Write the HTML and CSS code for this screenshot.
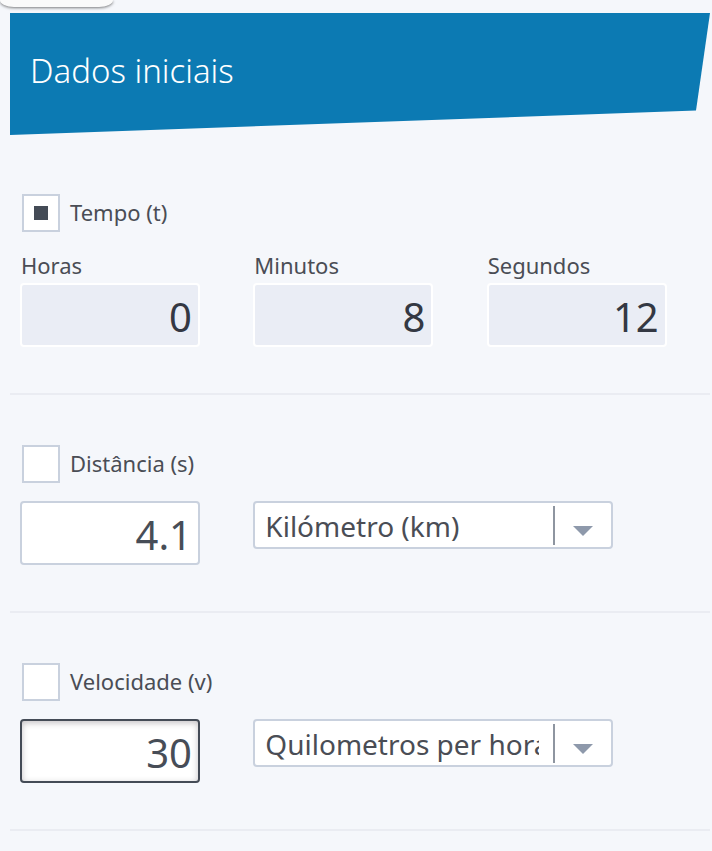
FILE: index.html
```html
<!DOCTYPE html>
<html lang="pt">
  <head>
    <meta charset="utf-8">
    <meta name="viewport" content="width=device-width, initial-scale=1">
    <title>Dados iniciais</title>
    <link rel="stylesheet" href="styles.css">
  </head>
  <body>
    <div class="tab"></div>

    <form class="calculator">
      <header class="header">
        <h1 class="title">Dados iniciais</h1>
      </header>

      <section class="section">
        <label class="option">
          <input class="checkbox" type="checkbox" checked>
          Tempo (t)
        </label>
        <div class="fields">
          <div class="field">
            <label class="field-label" for="hours">Horas</label>
            <input class="number" id="hours" type="text" value="0" disabled>
          </div>
          <div class="field">
            <label class="field-label" for="minutes">Minutos</label>
            <input class="number" id="minutes" type="text" value="8" disabled>
          </div>
          <div class="field">
            <label class="field-label" for="seconds">Segundos</label>
            <input class="number" id="seconds" type="text" value="12" disabled>
          </div>
        </div>
      </section>

      <section class="section">
        <label class="option">
          <input class="checkbox" type="checkbox">
          Distância (s)
        </label>
        <div class="fields">
          <input class="number" type="text" value="4.1" aria-label="Distância">
          <div class="unit">
            <select class="unit-select" aria-label="Unidade de distância">
              <option>Kilómetro (km)</option>
            </select>
            <span class="unit-divider"></span>
            <svg class="unit-arrow" width="20" height="10" viewBox="0 0 20 10">
              <path d="M0 0h20L10 10z" fill="#8e99ab"/>
            </svg>
          </div>
        </div>
      </section>

      <section class="section">
        <label class="option">
          <input class="checkbox" type="checkbox">
          Velocidade (v)
        </label>
        <div class="fields">
          <input class="number number-active" type="text" value="30" aria-label="Velocidade">
          <div class="unit">
            <select class="unit-select" aria-label="Unidade de velocidade">
              <option>Quilometros per hora (km/h)</option>
            </select>
            <span class="unit-divider"></span>
            <svg class="unit-arrow" width="20" height="10" viewBox="0 0 20 10">
              <path d="M0 0h20L10 10z" fill="#8e99ab"/>
            </svg>
          </div>
        </div>
      </section>
    </form>
  </body>
</html>
```
FILE: styles.css
```css
* {
  box-sizing: border-box;
}

body {
  margin: 0;
  background-color: #f5f7fb;
  color: #4a4d55;
  font-family: "Noto Sans", sans-serif;
  font-size: 22px;
}

/* bottom edge of the tab that hangs over the page */
.tab {
  position: absolute;
  top: 0;
  left: 0;
  width: 113px;
  height: 7px;
  background-color: #fafafa;
  border-radius: 0 0 14px 14px / 0 0 7px 7px;
  box-shadow: 0 1px 3px rgba(0, 0, 0, 0.5);
}

.calculator {
  padding: 13px 2px 0 10px;
}

.header {
  height: 122px;
  margin-bottom: 9px;
  padding: 34px 20px;
  background-color: #0c7ab3;
  clip-path: polygon(0 0, 100% 0, 98% 80%, 0 100%);
}

.title {
  margin: 0;
  color: white;
  font-size: 33px;
  font-weight: 300;
  line-height: 48px;
}

.section {
  padding: 50px 0 46px;
  border-bottom: 2px solid #eaecf2;
}

.option {
  display: flex;
  align-items: flex-start;
  gap: 10px;
  height: 38px;
  margin: 0 12px 18px;
  line-height: 36px;
}

.checkbox {
  appearance: none;
  display: grid;
  place-items: center;
  width: 38px;
  height: 38px;
  margin: 0;
  border: 2px solid #c9d1de;
  background-color: white;
}

.checkbox:checked::before {
  content: "";
  width: 14px;
  height: 14px;
  background-color: #444b56;
}

.fields {
  display: grid;
  grid-template-columns: repeat(3, 1fr);
  align-items: start;
}

.field {
  display: flex;
  flex-direction: column;
  gap: 2px;
}

.field-label {
  padding-left: 11px;
  line-height: 31px;
}

.number {
  width: 180px;
  height: 64px;
  margin: 0 0 0 10px;
  padding: 3px 6px 0;
  border: 2px solid #c9d1de;
  border-radius: 4px;
  outline: none;
  background-color: white;
  color: #474d57;
  font-family: inherit;
  font-size: 40px;
  text-align: right;
}

.number:disabled {
  border-color: white;
  background-color: #eaedf5;
  color: #343843;
}

.number-active {
  border-color: #444b56;
  box-shadow: inset 0 2px 6px rgba(60, 50, 60, 0.3);
}

.unit {
  position: relative;
  grid-column: 2 / 4;
  width: 360px;
  margin-left: 10px;
}

.unit-select {
  appearance: none;
  display: block;
  width: 100%;
  height: 48px;
  padding: 2px 72px 0 10px;
  border: 2px solid #c9d1de;
  border-radius: 4px;
  background-color: white;
  color: #4a4d55;
  font-family: inherit;
  font-size: 28px;
}

.unit-divider,
.unit-arrow {
  position: absolute;
  pointer-events: none;
}

.unit-divider {
  top: 5px;
  right: 58px;
  width: 2px;
  height: 39px;
  background-color: #8e95a0;
}

.unit-arrow {
  top: 25px;
  right: 20px;
}
```
